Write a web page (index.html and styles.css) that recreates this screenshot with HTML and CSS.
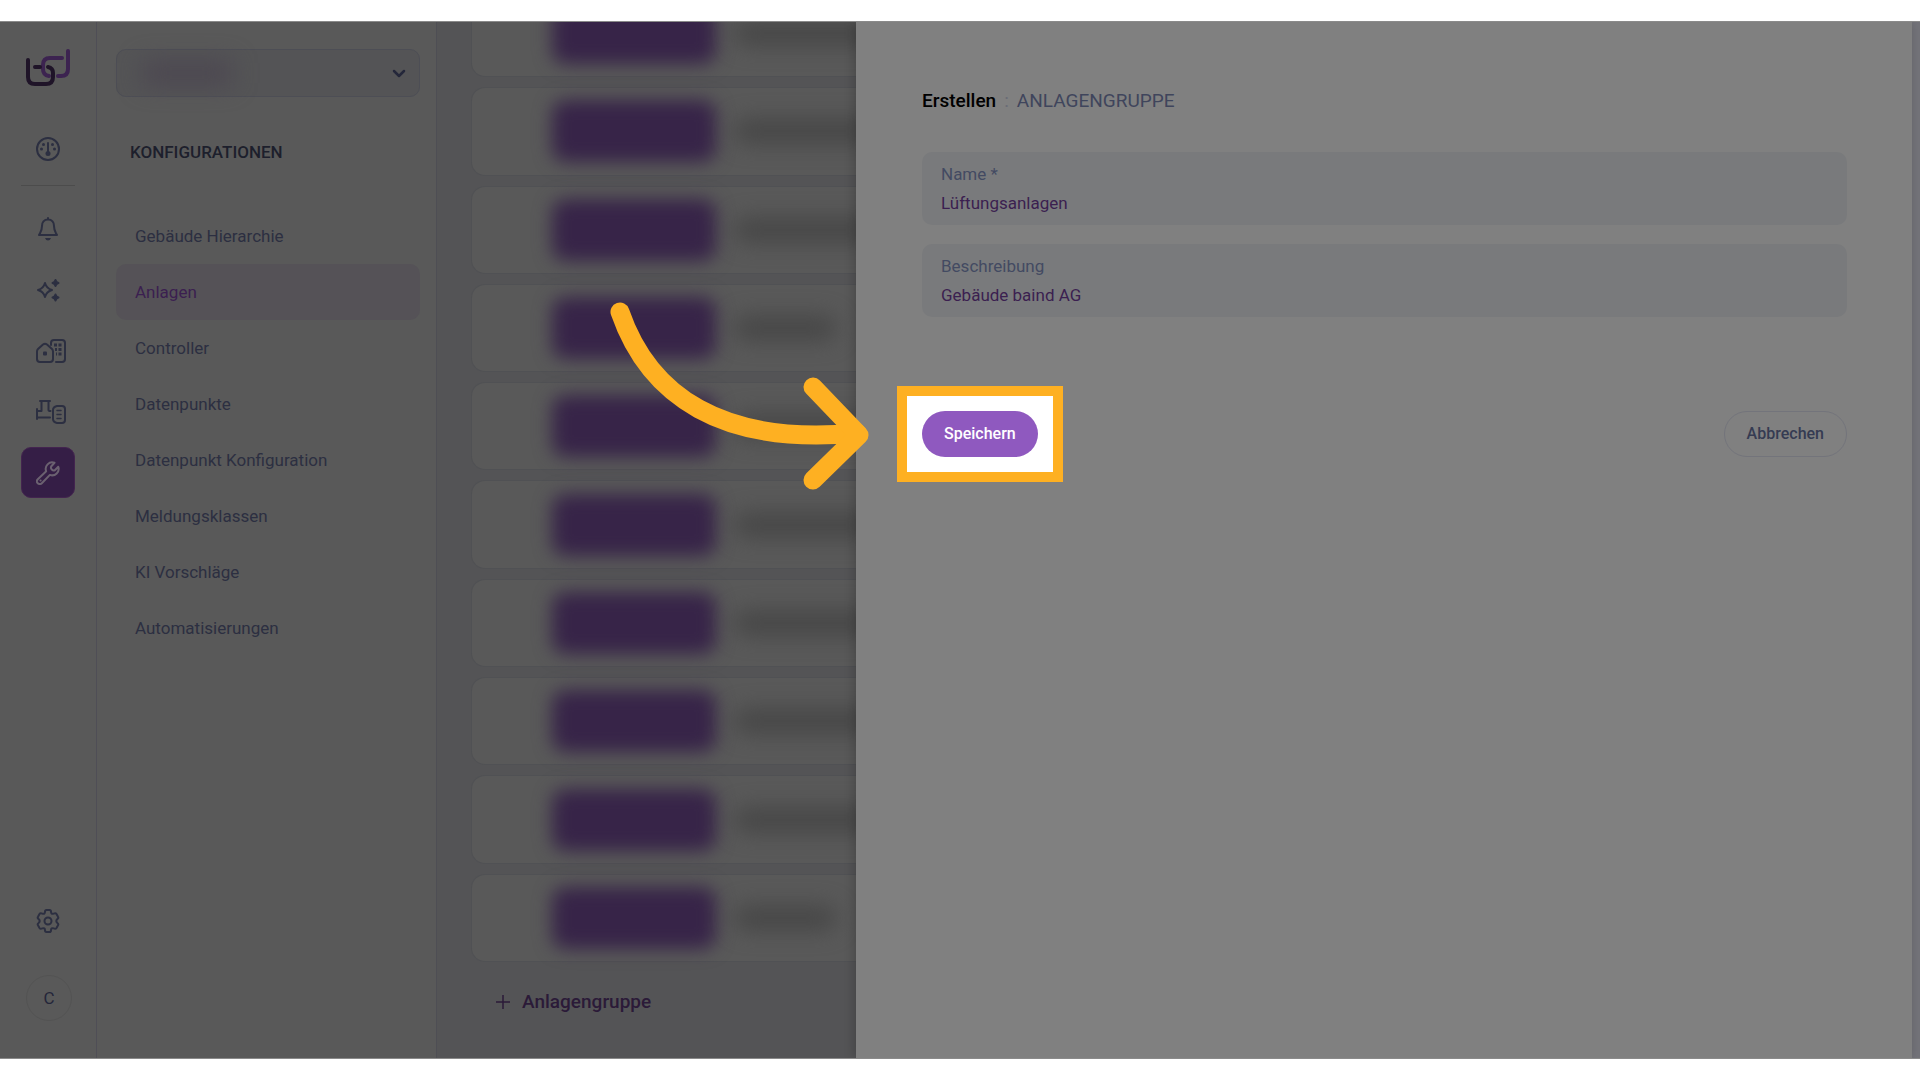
FILE: index.html
```html
<!DOCTYPE html>
<html lang="de">
<head>
	<meta charset="UTF-8" />
	<meta name="viewport" content="width=device-width, initial-scale=1.0" />
	<title>Anlagengruppe erstellen</title>
	<link rel="stylesheet" href="styles.css">
</head>
<body>
	<div class="stage">
		<!-- icon rail -->
		<nav class="rail">
			<a href="#" class="logo" aria-label="Start">
				<svg width="46" height="38" viewBox="0 0 46 38" fill="none" stroke-width="4" stroke-linecap="round" stroke-linejoin="round">
					<path d="M36 9H24q-7 0-7 7v4q0 6 6 7" stroke="#3c2350"/>
					<path d="M2 11v17q0 7 7 7h11q7 0 7-7v-4q0-5-5-6M9 18h5" stroke="#1f1428"/>
					<path d="M42 2v18q0 7-7 7h-3" stroke="#3c2350"/>
				</svg>
			</a>
			<a href="#" class="ico" aria-label="Dashboard">
				<svg width="24" height="24" viewBox="0 0 24 24" fill="none" stroke="#2c2f41" stroke-width="2" stroke-linecap="round">
					<circle cx="12" cy="12" r="11"/>
					<path d="M12 6v9"/>
					<g fill="#2c2f41" stroke="none">
						<circle cx="12" cy="16.500" r="2.500"/><circle cx="7.500" cy="7.500" r="1.500"/><circle cx="16.500" cy="7.500" r="1.500"/>
						<circle cx="5.500" cy="12" r="1.500"/><circle cx="18.500" cy="12" r="1.500"/>
					</g>
				</svg>
			</a>
			<hr>
			<a href="#" class="ico" aria-label="Meldungen">
				<svg width="24" height="24" viewBox="0 0 24 24" fill="none" stroke="#2c2f41" stroke-width="2" stroke-linecap="round" stroke-linejoin="round">
					<path d="M12 1v1.500M12 2.500c-4 0-6 3-6 6.500 0 5-1.500 6-3 9h18c-1.500-3-3-4-3-9 0-3.500-2-6.500-6-6.500z"/>
					<path d="M9 21h6q-1 2.500-3 2.500t-3-2.500z" fill="#2c2f41" stroke="none"/>
				</svg>
			</a>
			<a href="#" class="ico" aria-label="KI">
				<svg width="24" height="24" viewBox="0 0 24 24" fill="none" stroke="#2c2f41" stroke-width="2" stroke-linejoin="round">
					<path d="M9 5q1.500 5.500 7 7-5.500 1.500-7 7-1.500-5.500-7-7 5.500-1.500 7-7z"/>
					<path d="M19.500 2q.6 2.400 3 3-2.400.6-3 3-.6-2.400-3-3 2.400-.6 3-3zM19.500 16.500q.6 2.400 3 3-2.400.6-3 3-.6-2.400-3-3 2.400-.6 3-3z" fill="#2c2f41"/>
				</svg>
			</a>
			<a href="#" class="ico" aria-label="Gebäude">
				<svg width="30" height="24" viewBox="0 0 30 24" fill="none" stroke="#2c2f41" stroke-width="2" stroke-linecap="round" stroke-linejoin="round">
					<path d="M1 12.500q0-1.500 1-2.500l5-4.500q2-1.500 4 0l5 4.500q1 1 1 2.500V20q0 3-3 3H4q-3 0-3-3z"/>
					<path d="M15 6V4q0-3 3-3h8q3 0 3 3v16q0 3-3 3h-6"/>
					<rect x="7" y="12.500" width="4" height="4" rx="1" fill="#2c2f41" stroke="none"/>
					<path d="M18 6h3M22.500 6h3M19 10.500h2M22.500 10.500h3M20 15h1M22.500 15h3" stroke-width="3" stroke-linecap="butt"/>
				</svg>
			</a>
			<a href="#" class="ico" aria-label="Anlagen">
				<svg width="30" height="24" viewBox="0 0 30 24" fill="none" stroke="#2c2f41" stroke-width="2" stroke-linecap="round" stroke-linejoin="round">
					<path d="M4 1h10M5.500 1v10H1M12.500 1v9q0 1 2 1M1 9v10M1 17.500h13"/>
					<path d="M21 6h5q3 0 3 3v11q0 3-3 3h-5q-4-1-4-4v-9q0-3 4-4z"/>
					<path d="M21 10.500h4M21 14.500h4M21 18.500h4" stroke-width="1.500"/>
				</svg>
			</a>
			<a href="#" class="ico on" aria-label="Konfiguration">
				<svg width="24" height="24" viewBox="0 0 24 24" fill="none" stroke="#6b6170" stroke-width="2" stroke-linecap="round" stroke-linejoin="round">
					<path d="M18.500 1.800a6.500 6.500 0 0 0-8.300 8.500L1.800 18.200a2.800 2.800 0 0 0 4 4l8.100-8.300a6.500 6.500 0 0 0 8.400-8.200l-3.500 3.500q-1.700.6-3-.7t-.7-3z"/>
					<path d="M4.500 19.500h.1"/>
				</svg>
			</a>
			<a href="#" class="ico gear" aria-label="Einstellungen">
				<svg width="24" height="24" viewBox="0 0 24 24" fill="none" stroke="#2c2f41" stroke-width="2" stroke-linejoin="round">
					<path d="M10.500 1h3q1.500 0 1.500 1.800 0 2.700 2.700 1.800 2-.8 2.800.5l1.500 2.600q.8 1.300-.6 2.300-2.200 2 0 4 1.400 1 .6 2.300l-1.500 2.600q-.8 1.300-2.800.5-2.700-.9-2.700 1.800 0 1.800-1.500 1.800h-3Q9 23 9 21.200q0-2.700-2.700-1.800-2 .8-2.800-.5L2 16.300q-.8-1.300.6-2.300 2.200-2 0-4Q1.200 9 2 7.700l1.500-2.600q.8-1.300 2.800-.5Q9 5.500 9 2.800 9 1 10.500 1z"/>
					<circle cx="12" cy="12" r="3.500"/>
				</svg>
			</a>
			<button class="avatar">C</button>
		</nav>

		<!-- configuration menu -->
		<aside class="side">
			<button class="picker" aria-label="Gebäude wählen">
				<span class="smudge"></span>
				<svg width="14" height="10" viewBox="0 0 14 10" fill="none" stroke="#24273a" stroke-width="2.500" stroke-linecap="round" stroke-linejoin="round"><path d="M2 3l5 5 5-5"/></svg>
			</button>
			<h2>KONFIGURATIONEN</h2>
			<ul>
				<li><a href="#">Gebäude Hierarchie</a></li>
				<li><a href="#" class="on">Anlagen</a></li>
				<li><a href="#">Controller</a></li>
				<li><a href="#">Datenpunkte</a></li>
				<li><a href="#">Datenpunkt Konfiguration</a></li>
				<li><a href="#">Meldungsklassen</a></li>
				<li><a href="#">KI Vorschläge</a></li>
				<li><a href="#">Automatisierungen</a></li>
			</ul>
		</aside>

		<main class="list">
			<div class="rows">
				<div class="row"><i class="tag"></i><i class="txt"></i></div>
				<div class="row"><i class="tag"></i><i class="txt"></i></div>
				<div class="row"><i class="tag"></i><i class="txt"></i></div>
				<div class="row"><i class="tag"></i><i class="txt short"></i></div>
				<div class="row"><i class="tag"></i><i class="txt"></i></div>
				<div class="row"><i class="tag"></i><i class="txt"></i></div>
				<div class="row"><i class="tag"></i><i class="txt"></i></div>
				<div class="row"><i class="tag"></i><i class="txt"></i></div>
				<div class="row"><i class="tag"></i><i class="txt"></i></div>
				<div class="row"><i class="tag"></i><i class="txt short"></i></div>
			</div>
			<button class="add">
				<svg width="14" height="14" viewBox="0 0 14 14" stroke="#2b1a38" stroke-width="1.500"><path d="M7 0v14M0 7h14"/></svg>
				Anlagengruppe
			</button>
		</main>

		<!-- drawer -->
		<form class="drawer">
			<h1><b>Erstellen</b><span class="sep">:</span><span>ANLAGENGRUPPE</span></h1>
			<div class="field">
				<label for="name">Name *</label>
				<input id="name" type="text" value="Lüftungsanlagen">
			</div>
			<div class="field">
				<label for="desc">Beschreibung</label>
				<input id="desc" type="text" value="Gebäude baind AG">
			</div>
			<div class="actions">
				<div class="spot">
					<button type="button" class="btn save">Speichern</button>
					<svg class="arrow" width="270" height="200" viewBox="0 0 270 200" fill="none" stroke="#feb022" stroke-width="19" stroke-linecap="round" stroke-linejoin="round">
						<path d="M20 22C49 106 122 156 257 143"/>
						<path d="M213 97l46 48-46 45"/>
					</svg>
				</div>
				<button type="button" class="btn cancel">Abbrechen</button>
			</div>
		</form>
		<div class="edge"></div>
	</div>
</body>
</html>
```
FILE: styles.css
```css
*{margin: 0;padding: 0;box-sizing: border-box;}
body{
	background: #fff;padding: 21px 0;
	font: 17px/24px Roboto, sans-serif;color: #2c2f41;
}
a{color: inherit;text-decoration: none;}
button,input{font: inherit;border: 0;background: none;}
svg{display: block;flex: none;}
.stage{
	display: flex;height: calc(100vh - 42px);min-height: 900px;
	overflow: hidden;background: #595959;
	border-top: 1px solid #8a8a8a;border-bottom: 1px solid #8a8a8a;
}

/* rail */
.rail{
	flex: none;width: 97px;padding: 27px 21px 37px;
	display: flex;flex-direction: column;gap: 10px;
	border-right: 1px solid #4f4e56;
}
.logo{height: 64px;padding-left: 5px;}
.ico{
	height: 51px;border-radius: 10px;
	display: flex;align-items: center;padding-left: 15px;
}
.rail hr{border: 0;height: 1px;background: #4c4c4c;margin: 1px 0 7px;}
.ico.on{background: #351e46;border: 1px solid #43244f;padding-left: 14px;}
.gear{margin-top: auto;}
.avatar{
	width: 46px;height: 46px;margin: 19px 0 0 5px;
	border: 1px solid #535353;border-radius: 50%;color: #24263a;
}

/* menu */
.side{
	flex: none;width: 340px;padding: 27px 16px 0 19px;
	border-right: 1px solid #4e4e54;
}
.picker{
	width: 100%;height: 48px;padding: 0 13px 0 26px;
	display: flex;align-items: center;justify-content: space-between;
	background: #545456;border: 1px solid #4d4e55;border-radius: 10px;
}
.smudge{width: 88px;height: 22px;background: #4b4650;filter: blur(12px);}
.side h2{
	margin: 43px 0 44px 14px;
	font-size: 17px;line-height: 24px;font-weight: 500;color: #1d1f2c;
}
.side ul{list-style: none;}
.side li a{display: block;padding: 16px 19px;border-radius: 10px;}
.side .on{background: #555257;color: #3b1f50;}

/* list */
.list{
	flex: 1;min-width: 0;padding-left: 34px;
	display: flex;flex-direction: column;
	background: #545456;
}
.rows{
	flex: 1;margin-top: -33px;
	display: flex;flex-direction: column;gap: 10px;
}
.row{
	flex: 1;display: flex;align-items: center;gap: 18px;
	padding-left: 80px;background: #595959;
	border: 1px solid #505154;border-right: 0;border-radius: 14px 0 0 14px;
}
.tag{flex: none;width: 164px;height: 62px;background: #372448;border-radius: 14px;filter: blur(9px);}
.txt{flex: 1;height: 24px;margin-right: -20px;background: #464646;border-radius: 12px;filter: blur(11px);}
.txt.short{flex: none;width: 102px;}
.add{
	align-self: flex-start;height: 96px;padding: 0 25px 17px;
	display: flex;align-items: center;gap: 12px;
	font-size: 19px;font-weight: 500;color: #2b1a38;
}

/* drawer */
.drawer{
	flex: none;width: 55%;padding: 67px 65px 0 66px;
	position: relative;background: #808080;
	box-shadow: -2px 0 10px rgba(0,0,0,.2);
}
.edge{flex: none;width: 8px;background: #737379;}
.drawer h1{
	display: flex;gap: 8px;margin-bottom: 39px;
	font-size: 19px;line-height: 24px;font-weight: 400;color: #3f455c;
}
.drawer h1 b{font-weight: 500;color: #000;}
.drawer .sep{color: #6a6c76;}
.field{
	height: 73px;margin-bottom: 19px;padding: 10px 19px;
	background: #797a7c;border-radius: 10px;
}
.field label{display: block;color: #434a62;}
.field input{
	display: block;width: 100%;height: 24px;margin-top: 5px;
	color: #3b1f50;outline: 0;
}
.actions{display: flex;justify-content: space-between;margin-top: 94px;}
.btn{
	height: 46px;padding: 0 22px;border-radius: 23px;
	font-size: 16px;font-weight: 500;
}
.spot{position: relative;}
.spot:before{
	content: "";position: absolute;top: -25px;right: -25px;bottom: -25px;left: -25px;
	background: #fff;border: 10px solid #feb022;
}
.save{position: relative;background: #8f59bf;color: #fff;}
.cancel{border: 1px solid #73747b;color: #353b52;}
.arrow{position: absolute;left: -322px;top: -121px;}
```
